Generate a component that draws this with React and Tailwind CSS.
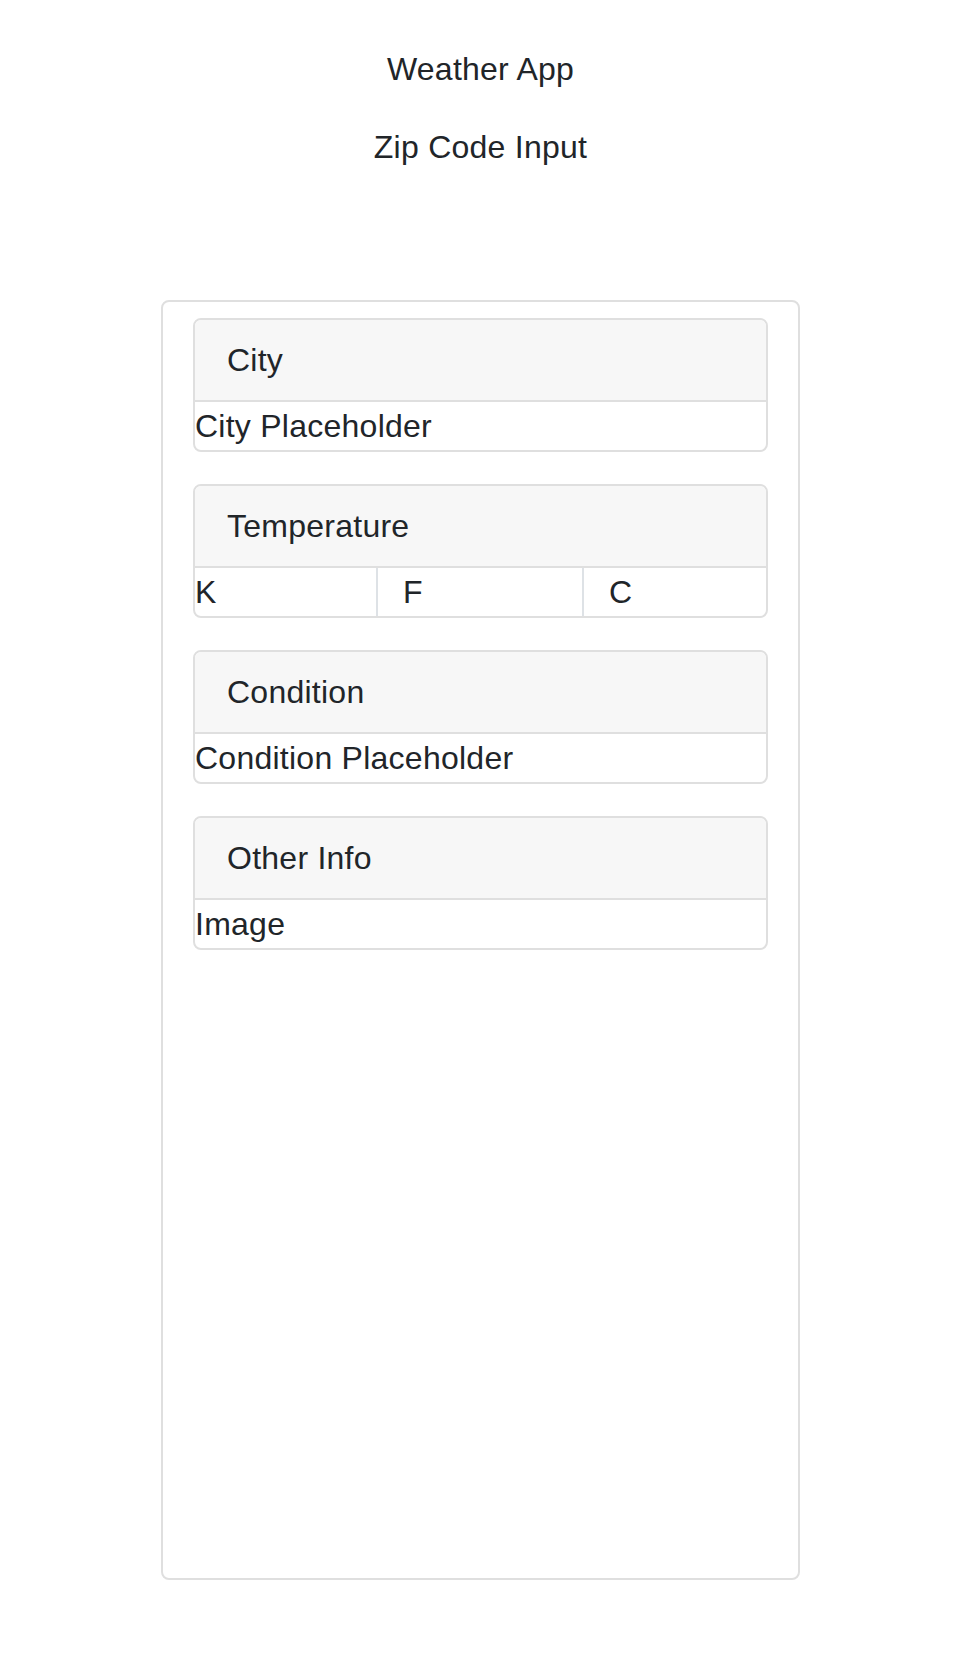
export default function App() {
  const Box = ({ title, children }) => (
    <div className="mb-[32px] overflow-hidden rounded-[8px] border-2 border-[#dfdfdf]">
      <div className="border-b-2 border-[#dfdfdf] bg-[#f7f7f7] px-[32px] py-[16px]">{title}</div>
      {children}
    </div>
  );
  return (
    <div className="min-h-[1672px] bg-white">
      <div className="w-[961px] font-['Liberation_Sans',Arial,sans-serif] text-[32px] leading-[48px] tracking-[0.25px] text-[#212529]">
        <div className="pt-[45px] text-center">Weather App</div>
        <div className="mt-[30px] text-center">Zip Code Input</div>
        <div className="mx-auto mt-[129px] h-[1280px] w-[639px] rounded-[8px] border-2 border-[#dfdfdf] px-[30px] pt-[16px]">
          <Box title="City">
            <div>City Placeholder</div>
          </Box>
          <Box title="Temperature">
            <div className="flex">
              <div className="w-[181px]">K</div>
              <div className="w-[206px] border-l-2 border-[#dee2e6] pl-[25px]">F</div>
              <div className="flex-1 border-l-2 border-[#dee2e6] pl-[25px]">C</div>
            </div>
          </Box>
          <Box title="Condition">
            <div>Condition Placeholder</div>
          </Box>
          <Box title="Other Info">
            <div>Image</div>
          </Box>
        </div>
      </div>
    </div>
  );
}
